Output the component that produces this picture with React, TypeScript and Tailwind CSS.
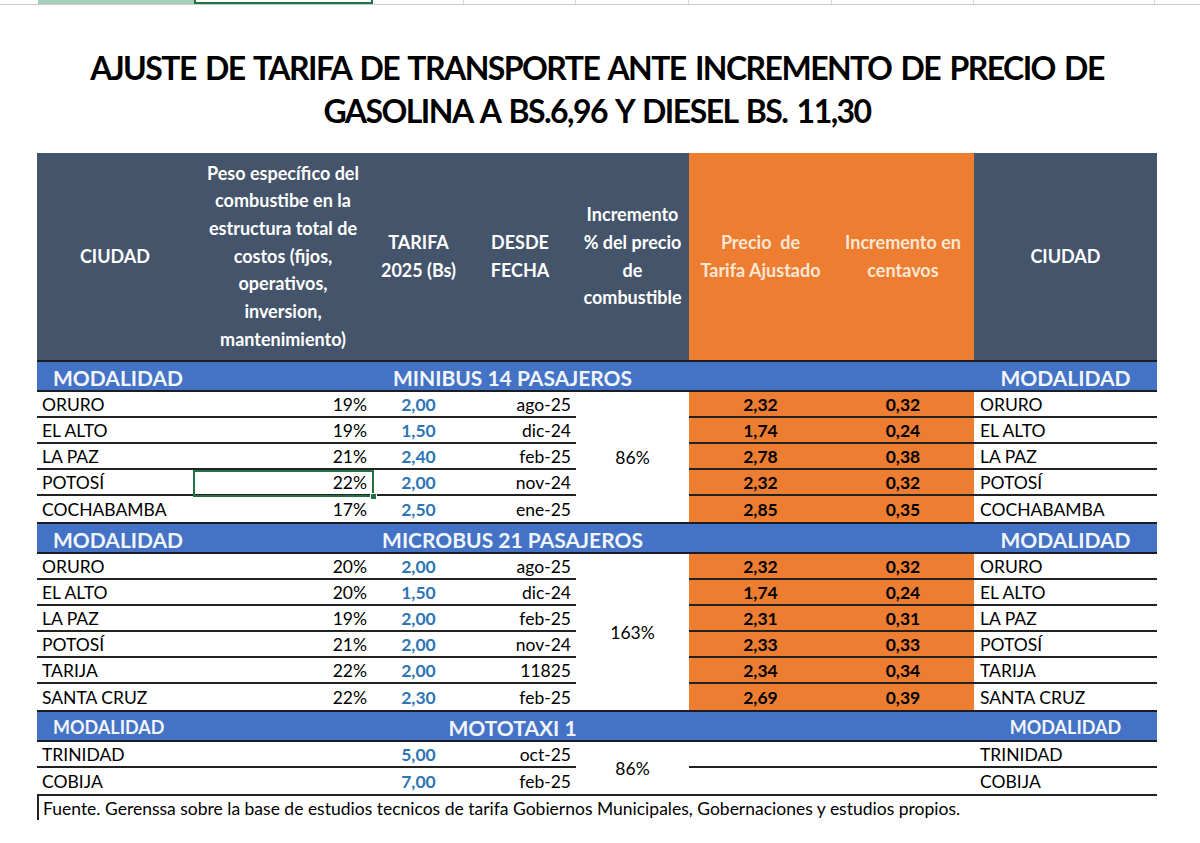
import { Fragment } from "react";

type Row = {
    city: string;
    pct: string;
    tarifa: string;
    date: string;
    adj: string;
    inc: string;
};

const cols = "grid grid-cols-[156px_180px_91px_112px_113px_143px_142px_183px]";

const minibus: Row[] = [
    { city: "ORURO", pct: "19%", tarifa: "2,00", date: "ago-25", adj: "2,32", inc: "0,32" },
    { city: "EL ALTO", pct: "19%", tarifa: "1,50", date: "dic-24", adj: "1,74", inc: "0,24" },
    { city: "LA PAZ", pct: "21%", tarifa: "2,40", date: "feb-25", adj: "2,78", inc: "0,38" },
    { city: "POTOSÍ", pct: "22%", tarifa: "2,00", date: "nov-24", adj: "2,32", inc: "0,32" },
    { city: "COCHABAMBA", pct: "17%", tarifa: "2,50", date: "ene-25", adj: "2,85", inc: "0,35" },
];

const microbus: Row[] = [
    { city: "ORURO", pct: "20%", tarifa: "2,00", date: "ago-25", adj: "2,32", inc: "0,32" },
    { city: "EL ALTO", pct: "20%", tarifa: "1,50", date: "dic-24", adj: "1,74", inc: "0,24" },
    { city: "LA PAZ", pct: "19%", tarifa: "2,00", date: "feb-25", adj: "2,31", inc: "0,31" },
    { city: "POTOSÍ", pct: "21%", tarifa: "2,00", date: "nov-24", adj: "2,33", inc: "0,33" },
    { city: "TARIJA", pct: "22%", tarifa: "2,00", date: "11825", adj: "2,34", inc: "0,34" },
    { city: "SANTA CRUZ", pct: "22%", tarifa: "2,30", date: "feb-25", adj: "2,69", inc: "0,39" },
];

const mototaxi: Row[] = [
    { city: "TRINIDAD", pct: "", tarifa: "5,00", date: "oct-25", adj: "", inc: "" },
    { city: "COBIJA", pct: "", tarifa: "7,00", date: "feb-25", adj: "", inc: "" },
];

function Band({ label, small }: { label: string; small?: boolean }) {
    const side = small ? "text-[18px]" : "text-[21px]";
    return (
        <div className={`${cols} h-[32px] bg-[#4472c4] border-y-2 border-[#1c1c24] items-center font-bold text-[#f1f5fc]`}>
            <div className={`pl-4 ${side}`}>MODALIDAD</div>
            <div className="col-span-5 text-center text-[21px]">{label}</div>
            <div />
            <div className={`text-center ${side}`}>MODALIDAD</div>
        </div>
    );
}

function Section({ rows, merged, orange = true }: { rows: Row[]; merged: string; orange?: boolean }) {
    const span = rows.length === 6 ? "row-span-6" : rows.length === 5 ? "row-span-5" : "row-span-2";
    return (
        <div className={`${cols} auto-rows-[26px] text-[17.5px] text-black`}>
            {rows.map((r, i) => {
                const line = i < rows.length - 1 ? "border-b-2 border-[#222]" : "";
                const fill = orange ? "bg-[#ed7d31]" : "";
                return (
                    <Fragment key={i}>
                        <div className={`${line} pt-[3px] pl-[5px] flex items-center`}>{r.city}</div>
                        <div className={`${line} pt-[3px] pr-[6px] flex items-center justify-end`}>{r.pct}</div>
                        <div className={`${line} pt-[3px] flex items-center justify-center font-bold text-[#2e75b6]`}>{r.tarifa}</div>
                        <div className={`${line} pt-[3px] pr-[5px] flex items-center justify-end`}>{r.date}</div>
                        {i === 0 && (
                            <div className={`${span} pt-[3px] flex items-center justify-center`}>{merged}</div>
                        )}
                        <div className={`${line} ${fill} pt-[3px] flex items-center justify-center font-bold`}>{r.adj}</div>
                        <div className={`${line} ${fill} pt-[3px] flex items-center justify-center font-bold`}>{r.inc}</div>
                        <div className={`${line} pt-[3px] pl-[6px] flex items-center`}>{r.city}</div>
                    </Fragment>
                );
            })}
        </div>
    );
}

export default function App() {
    return (
        <div className="w-[1200px] h-[843px] overflow-hidden bg-white font-['Lato','Liberation_Sans',sans-serif]">
            {/* sheet column headers */}
            <div className="flex h-[5px] border-b border-[#c9c9c9]">
                <div className="w-[38px]" />
                <div className="w-[156px] bg-[#a3d0b6]" />
                <div className="w-[179px] border-x-2 border-b-2 border-[#217346]" />
                <div className="w-[91px] border-r border-[#d6d6d6]" />
                <div className="w-[112px] border-r border-[#d6d6d6]" />
                <div className="w-[113px] border-r border-[#d6d6d6]" />
                <div className="w-[143px] border-r border-[#d6d6d6]" />
                <div className="w-[142px] border-r border-[#d6d6d6]" />
                <div className="w-[181px] border-r border-[#d6d6d6]" />
            </div>

            <div className="ml-[37px] w-[1120px] mt-[41px] text-center font-bold text-[32px] tracking-[-1.55px] [word-spacing:3px] leading-[43px] text-black">
                AJUSTE DE TARIFA DE TRANSPORTE ANTE INCREMENTO DE PRECIO DE
                <br />
                GASOLINA A BS.6,96 Y DIESEL BS. 11,30
            </div>

            <div className="relative ml-[37px] w-[1120px] mt-[21px]">
                <div className={`${cols} h-[207px] text-[18px] font-bold leading-[27.7px] text-center`}>
                    <div className="bg-[#44546a] text-white flex items-center justify-center">CIUDAD</div>
                    <div className="bg-[#44546a] text-white flex items-center justify-center whitespace-nowrap">
                        <div>
                            Peso específico del<br />combustibe en la<br />estructura total de<br />costos (fijos,<br />operativos,<br />inversion,<br />mantenimiento)
                        </div>
                    </div>
                    <div className="bg-[#44546a] text-white flex items-center justify-center">
                        <div>TARIFA<br />2025 (Bs)</div>
                    </div>
                    <div className="bg-[#44546a] text-white flex items-center justify-center">
                        <div>DESDE<br />FECHA</div>
                    </div>
                    <div className="bg-[#44546a] text-white flex items-center justify-center whitespace-nowrap">
                        <div>Incremento<br />% del precio<br />de<br />combustible</div>
                    </div>
                    <div className="bg-[#ed7d31] text-[#fde6d4] flex items-center justify-center whitespace-nowrap">
                        <div>Precio&nbsp; de<br />Tarifa Ajustado</div>
                    </div>
                    <div className="bg-[#ed7d31] text-[#fde6d4] flex items-center justify-center whitespace-nowrap">
                        <div>Incremento en<br />centavos</div>
                    </div>
                    <div className="bg-[#44546a] text-white flex items-center justify-center">CIUDAD</div>
                </div>

                <Band label="MINIBUS 14 PASAJEROS" />
                <Section rows={minibus} merged="86%" />
                <Band label="MICROBUS 21 PASAJEROS" />
                <Section rows={microbus} merged="163%" />
                <Band label="MOTOTAXI 1" small />
                <Section rows={mototaxi} merged="86%" orange={false} />

                <div className="h-[26px] border-t-2 border-l-2 border-[#222] pl-[4px] pt-[2px] flex items-center text-[17.5px] text-black">
                    Fuente. Gerenssa sobre la base de estudios tecnicos de tarifa Gobiernos Municipales, Gobernaciones y estudios propios.
                </div>

                {/* selected cell */}
                <div className="absolute left-[156px] top-[317px] w-[181px] h-[27px] border-2 border-[#217346]">
                    <div className="absolute -right-[5px] -bottom-[5px] w-[7px] h-[7px] bg-[#217346] border border-white" />
                </div>
            </div>
        </div>
    );
}
